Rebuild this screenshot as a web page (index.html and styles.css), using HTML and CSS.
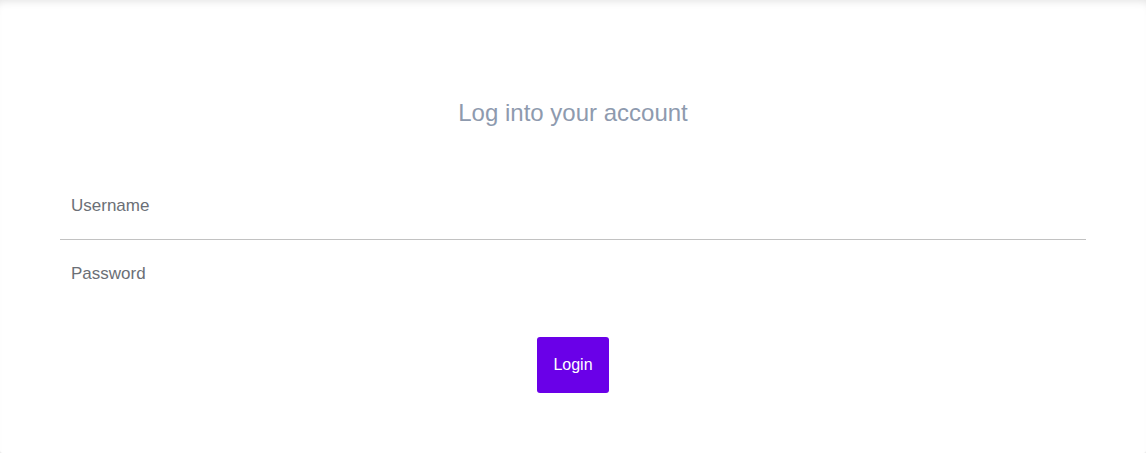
FILE: index.html
```html
<!DOCTYPE html>
<html>
<head>
<meta charset="utf-8">
<link rel="stylesheet" href="styles.css">
</head>
<body>
<div class="card">
  <h1 class="title">Log into your account</h1>
  <form class="form">
    <div class="field field-top"><input class="input" type="text" placeholder="Username"></div>
    <div class="field"><input class="input" type="password" placeholder="Password"></div>
    <div class="actions"><button class="btn" type="button">Login</button></div>
  </form>
</div>
</body>
</html>
```

FILE: styles.css
```css
html, body {
  margin: 0;
  padding: 0;
  background: #ececec;
  font-family: "Liberation Sans", Arial, sans-serif;
}
.card {
  box-sizing: border-box;
  height: 453px;
  padding: 99px 60px 0;
  border-radius: 3px;
  background: #fff;
  box-shadow: inset 0 7px 8px -6px rgba(0, 0, 0, 0.12);
}
.title {
  margin: 0;
  font-size: 24px;
  line-height: 28px;
  font-weight: 400;
  text-align: center;
  color: #8e9aae;
}
.form {
  margin-top: 45px;
  display: flex;
  flex-direction: column;
}
.field {
  height: 67px;
  display: flex;
  align-items: center;
}
.field-top {
  border-bottom: 1px solid #c2c2c2;
}
.input {
  width: 100%;
  border: none;
  outline: none;
  background: transparent;
  padding: 0 11px;
  font-family: inherit;
  font-size: 17px;
  color: #333;
}
.input::placeholder {
  color: #6b6f76;
  opacity: 1;
}
.actions {
  display: flex;
  justify-content: center;
  margin-top: 30px;
}
.btn {
  width: 72px;
  height: 56px;
  border: none;
  border-radius: 3px;
  background: #6a00e8;
  color: #fff;
  font-family: inherit;
  font-size: 16px;
}
```
